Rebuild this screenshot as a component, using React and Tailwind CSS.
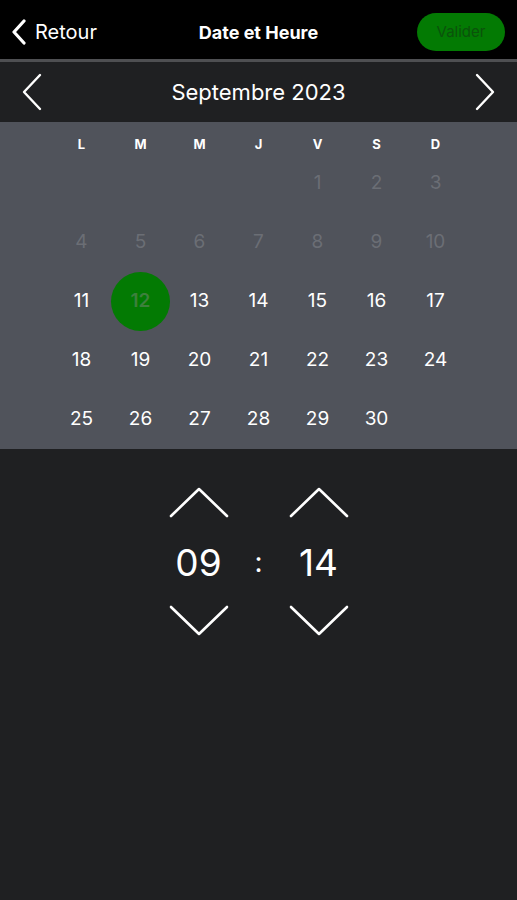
const DAYS = ['L', 'M', 'M', 'J', 'V', 'S', 'D'];

// septembre 2023 : commence un vendredi
const CELLS = [
  ...Array(4).fill(null),
  ...Array.from({ length: 30 }, (_, i) => i + 1),
];

function Chevron({ up }) {
  return (
    <svg width="60" height="32" viewBox="0 0 60 32" fill="none">
      <path
        d={up ? 'M2 30 L30 3 L58 30' : 'M2 2 L30 29 L58 2'}
        stroke="white"
        strokeWidth="2.6"
        strokeLinecap="round"
        strokeLinejoin="round"
      />
    </svg>
  );
}

function Spinner({ value }) {
  return (
    <div className="flex flex-col items-center w-[60px]">
      <Chevron up />
      <span className="text-[37px] leading-none text-white mt-[26px] mb-[24px]">{value}</span>
      <Chevron />
    </div>
  );
}

export default function App() {
  return (
    <div className="w-[517px] h-[900px] flex flex-col bg-[#1f2022] font-['Inter',sans-serif] overflow-hidden">
      {/* Header */}
      <div className="h-[59px] bg-black flex items-center justify-between pl-[11px] pr-[12px] pt-[5px] relative">
        <div className="flex items-center text-white">
          <svg width="16" height="26" viewBox="0 0 16 26" fill="none">
            <path d="M13 2 L3 13 L13 24" stroke="white" strokeWidth="3.2" strokeLinecap="round" strokeLinejoin="round" />
          </svg>
          <span className="text-[20px] ml-[8px]">Retour</span>
        </div>
        <span className="absolute left-0 right-0 top-[5px] bottom-0 flex items-center justify-center text-white font-bold text-[18px] pointer-events-none">Date et Heure</span>
        <button className="w-[88px] h-[38px] rounded-full bg-[#037a03] text-[#0b520b] text-[15px]">Valider</button>
      </div>
      <div className="h-[3px] bg-[#4e4f52]" />

      {/* Month nav */}
      <div className="h-[60px] flex items-center justify-between px-[16px] text-white">
        <svg width="32" height="40" viewBox="0 0 32 40" fill="none">
          <path d="M24 3 L8 20 L24 37" stroke="white" strokeWidth="2.4" strokeLinecap="round" strokeLinejoin="round" />
        </svg>
        <span className="text-[22px]">Septembre 2023</span>
        <svg width="32" height="40" viewBox="0 0 32 40" fill="none">
          <path d="M8 3 L24 20 L8 37" stroke="white" strokeWidth="2.4" strokeLinecap="round" strokeLinejoin="round" />
        </svg>
      </div>

      {/* Calendar */}
      <div className="bg-[#50535b] pt-[13px] flex flex-col items-center">
        <div className="grid grid-cols-7 w-[413px] h-[19px]">
          {DAYS.map((d, i) => (
            <span key={i} className="text-center text-white text-[13px] font-bold leading-[19px]">{d}</span>
          ))}
        </div>
        <div className="grid grid-cols-7 w-[413px]">
          {CELLS.map((n, i) => (
            <div key={i} className="h-[59px] flex items-center justify-center">
              {n === 12 ? (
                <span className="w-[59px] h-[59px] rounded-full bg-[#037a03] text-[#3d803d] text-[19px] font-semibold flex items-center justify-center">12</span>
              ) : n ? (
                <span className={`text-[19px] ${n < 11 ? 'text-[#6b6e75]' : 'text-white'}`}>{n}</span>
              ) : null}
            </div>
          ))}
        </div>
      </div>

      {/* Time */}
      <div className="flex justify-center items-center gap-[26px] pt-[37px]">
        <Spinner value="09" />
        <span className="w-[8px] text-center text-white text-[28px] leading-none">:</span>
        <Spinner value="14" />
      </div>
    </div>
  );
}
